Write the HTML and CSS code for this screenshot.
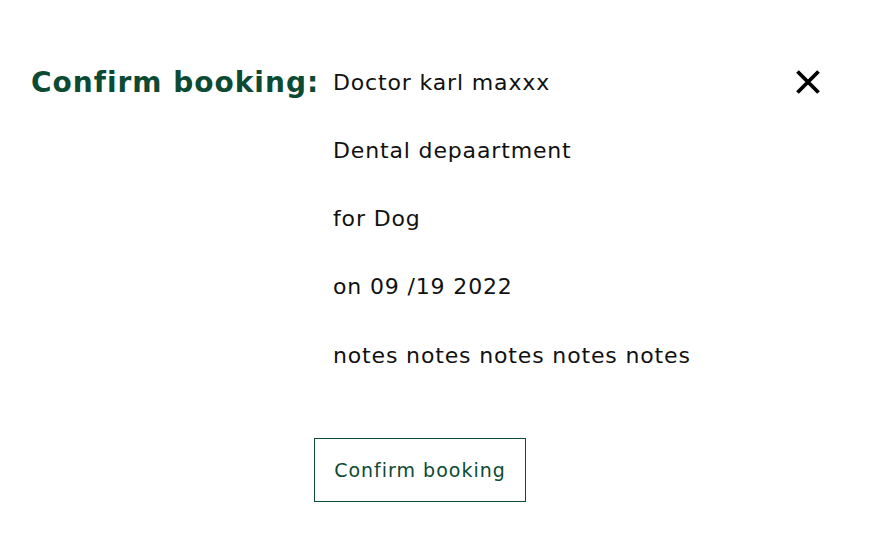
FILE: index.html
```html
<!DOCTYPE html>
<html>
<head>
<meta charset="utf-8">
<link rel="stylesheet" href="styles.css">
</head>
<body>
<div class="modal">
  <div class="top">
    <h2 class="title">Confirm booking:</h2>
    <div class="details">
      <p class="line">Doctor karl maxxx</p>
      <p class="line">Dental depaartment</p>
      <p class="line">for Dog</p>
      <p class="line">on 09 /19 2022</p>
      <p class="line notes">notes notes notes notes notes</p>
    </div>
    <button class="close" aria-label="Close">
      <svg width="26" height="26" viewBox="0 0 26 26"><path d="M2.5 2.5 L23.5 23.5 M23.5 2.5 L2.5 23.5" stroke="#000" stroke-width="3.8" fill="none"/></svg>
    </button>
  </div>
  <div class="actions">
    <button class="confirm">Confirm booking</button>
  </div>
</div>
</body>
</html>
```
FILE: styles.css
```css
* { box-sizing: border-box; }
body {
  margin: 0;
  background: #fff;
  font-family: "DejaVu Sans", sans-serif;
}
.modal {
  padding: 68px 0 0 31px;
}
.top {
  display: flex;
  align-items: flex-start;
}
.title {
  margin: 0;
  width: 302px;
  font-size: 28px;
  letter-spacing: 1px;
  font-weight: 700;
  color: #0c4a33;
  line-height: 30px;
}
.details {
  display: flex;
  flex-direction: column;
  gap: 38px;
}
.line {
  margin: 0;
  font-size: 22px;
  letter-spacing: 0.85px;
  line-height: 30px;
  color: #111;
}
.notes { margin-top: 1px; }
.close {
  margin-left: auto;
  margin-right: 54px;
  margin-top: 1px;
  padding: 0;
  border: 0;
  background: none;
  line-height: 0;
}
.actions {
  padding-left: 283px;
  margin-top: 67px;
}
.confirm {
  width: 212px;
  height: 64px;
  border: 1px solid #0c4a33;
  background: #fff;
  color: #0c4a33;
  font-family: inherit;
  font-size: 19px;
  letter-spacing: 1px;
  padding: 0;
}
```
